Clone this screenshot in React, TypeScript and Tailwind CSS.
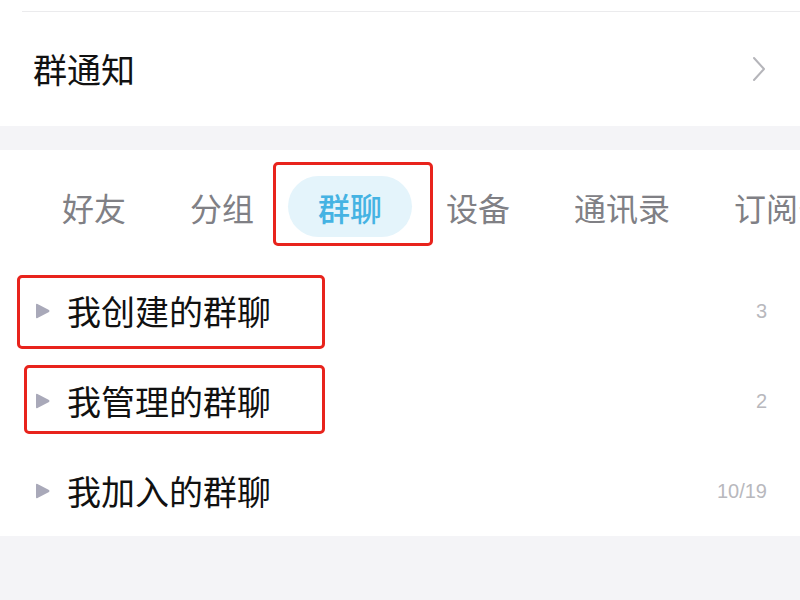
import React from "react";

const cjk = "font-['PingFang_SC','Noto_Sans_CJK_SC',sans-serif]";

type Group = { name: string; count: string; marked?: "a" | "b" };

const groups: Group[] = [
  { name: "我创建的群聊", count: "3", marked: "a" },
  { name: "我管理的群聊", count: "2", marked: "b" },
  { name: "我加入的群聊", count: "10/19" },
];

const tabs = ["好友", "分组", "群聊", "设备", "通讯录", "订阅号"];

function Triangle() {
  return (
    <svg width="15" height="16" viewBox="0 0 15 16" className="shrink-0">
      <path d="M1 1.8 Q1 0.2 2.5 1 L14 7 Q15 8 14 9 L2.5 15 Q1 15.8 1 14.2 Z" fill="#a9a9b9" />
    </svg>
  );
}

function GroupRow({ g }: { g: Group }) {
  return (
    <div className="relative flex h-[90px] items-center pl-[35px] pr-[33px]">
      <Triangle />
      <span className={`ml-[17px] flex-1 text-[34px] leading-none text-[#111] ${cjk}`}>{g.name}</span>
      <span className="font-['Liberation_Sans',sans-serif] text-[20px] text-[#b8b8bd]">{g.count}</span>
      {g.marked === "a" && (
        <span className="absolute left-[17px] top-[9px] h-[74px] w-[308px] rounded-[5px] border-[3px] border-[#e8231c]" />
      )}
      {g.marked === "b" && (
        <span className="absolute left-[24px] top-[9px] h-[69px] w-[301px] rounded-[5px] border-[3px] border-[#e8231c]" />
      )}
    </div>
  );
}

export default function App() {
  return (
    <div className="h-[600px] w-[800px] overflow-hidden bg-[#f4f4f7]">
      {/* group notice */}
      <div className="bg-white pt-[11px]">
        <div className="ml-[22px] border-t border-[#ebebed]" />
        <div className="flex h-[114px] items-center pl-[33px] pr-[34px]">
          <span className={`flex-1 text-[34px] leading-none text-[#111] ${cjk}`}>群通知</span>
          <svg width="14" height="26" viewBox="0 0 14 26">
            <polyline points="2,2 12,13 2,24" fill="none" stroke="#b5b5ba" strokeWidth="2" strokeLinecap="round" strokeLinejoin="round" />
          </svg>
        </div>
      </div>

      <div className="mt-[24px] bg-white">
        {/* tabs */}
        <div className="flex h-[116px] items-center gap-1 overflow-hidden whitespace-nowrap pb-[3px] pl-[32px]">
          {tabs.map((t) =>
            t === "群聊" ? (
              <div key={t} className="relative shrink-0">
                <span
                  className={`flex h-[61px] items-center rounded-full bg-[#e4f4fb] px-[30px] text-[32px] font-medium leading-none text-[#45b3e3] ${cjk}`}
                >
                  {t}
                </span>
                <span className="absolute -bottom-[9px] -left-[15px] -right-[21px] -top-[14px] rounded-[5px] border-[3px] border-[#e8231c]" />
              </div>
            ) : (
              <span key={t} className={`shrink-0 px-[30px] text-[32px] leading-none text-[#808085] ${cjk}`}>
                {t}
              </span>
            )
          )}
        </div>

        {/* group list */}
        {groups.map((g) => (
          <GroupRow key={g.name} g={g} />
        ))}
      </div>
    </div>
  );
}
